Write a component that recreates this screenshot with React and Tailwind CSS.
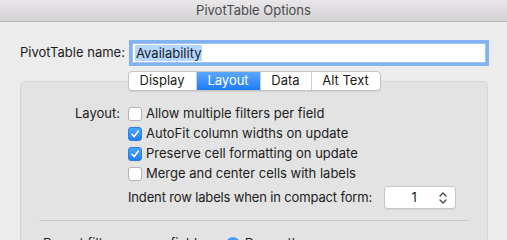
import React from "react"

function Checkbox({ checked }) {
  if (checked) {
    return (
      <div className="w-[14px] h-[14px] rounded-[3px] bg-gradient-to-b from-[#4ea3fb] to-[#1f7ff0] border border-[#2a7fe6] flex items-center justify-center">
        <svg width="10" height="10" viewBox="0 0 10 10">
          <path d="M2 5.3 L4.2 7.6 L8.2 2.2" fill="none" stroke="#fff" strokeWidth="1.6" strokeLinecap="round" strokeLinejoin="round" />
        </svg>
      </div>
    )
  }
  return <div className="w-[14px] h-[14px] rounded-[3px] bg-white border border-[#b4b4b4]" />
}

function CheckRow({ checked, label, children }) {
  return (
    <div className="flex items-center h-[20px]">
      <div className="w-[107px] pr-[8px] text-right">{children}</div>
      <Checkbox checked={checked} />
      <span className="ml-[4px]">{label}</span>
    </div>
  )
}

export default function App() {
  const tabs = [
    { name: "Display", w: "w-[67px]" },
    { name: "Layout", w: "w-[64px]", active: true },
    { name: "Data", w: "w-[51px]" },
    { name: "Alt Text", w: "w-[69px]" },
  ]

  return (
    <div className="w-[507px] h-[240px] overflow-hidden bg-[#ececec] text-[13px] text-[#1c1c1c] font-['Inter',sans-serif]">
      {/* title bar */}
      <div className="h-[22px] bg-gradient-to-b from-[#e9e7e9] to-[#d3d1d3] border-b border-[#b8b6b8] flex items-center justify-center text-[#4a4a4a]">
        PivotTable Options
      </div>

      {/* name row */}
      <div className="flex items-center mt-[21px] pl-[20px]">
        <span className="w-[112px]">PivotTable name:</span>
        <div className="w-[354px] h-[20px] bg-white border border-[#9fc3ef] shadow-[0_0_0_3px_#80b3ef] flex items-center pl-[2px]">
          <span className="bg-[#b3d7ff] px-[1px] leading-[16px]">Availability</span>
        </div>
      </div>

      {/* group box */}
      <div className="mt-[18px] ml-[20px] w-[468px] h-[200px] bg-[#e3e3e3] border border-[#d6d6d6] rounded-[5px]">
        <div className="flex justify-center -mt-[11px]">
          <div className="flex h-[20px] bg-white border border-[#c3c3c3] rounded-[4px] overflow-hidden shadow-[0_1px_1px_rgba(0,0,0,0.08)]">
            {tabs.map((t, i) => (
              <div
                key={t.name}
                className={`${t.w} flex items-center justify-center ${
                  t.active
                    ? "bg-gradient-to-b from-[#5aa8fc] to-[#1b7cf5] text-white"
                    : "text-[#1c1c1c]"
                } ${i > 0 ? "border-l border-[#d0d0d0]" : ""}`}
              >
                {t.name}
              </div>
            ))}
          </div>
        </div>

        <div className="mt-[13px]">
          <CheckRow label="Allow multiple filters per field">Layout:</CheckRow>
          <CheckRow checked label="AutoFit column widths on update" />
          <CheckRow checked label="Preserve cell formatting on update" />
          <CheckRow label="Merge and center cells with labels" />

          <div className="flex items-center mt-[2px] pl-[107px]">
            <span className="tracking-[-0.15px]">Indent row labels when in compact form:</span>
            <div className="ml-[12px] w-[72px] h-[23px] bg-white border border-[#c6c6c6] rounded-[4px] flex items-center shadow-[0_1px_1px_rgba(0,0,0,0.06)]">
              <span className="flex-1 text-center pl-[6px]">1</span>
              <svg width="12" height="16" viewBox="0 0 12 16" className="mr-[6px]">
                <path d="M3 6 L6 3 L9 6 M3 10 L6 13 L9 10" fill="none" stroke="#444" strokeWidth="1.3" strokeLinecap="round" strokeLinejoin="round" />
              </svg>
            </div>
          </div>

          <div className="mx-[18px] mt-[11px] border-t border-[#c9c9c9]" />

          <div className="flex items-center mt-[13px] pl-[22px]">
            <span>Report filter arrange fields:</span>
            <div className="ml-[18px] w-[14px] h-[14px] rounded-full bg-gradient-to-b from-[#4ea3fb] to-[#1f7ff0] flex items-center justify-center">
              <div className="w-[5px] h-[5px] rounded-full bg-white" />
            </div>
            <span className="ml-[5px]">Down, then over</span>
          </div>
        </div>
      </div>
    </div>
  )
}
